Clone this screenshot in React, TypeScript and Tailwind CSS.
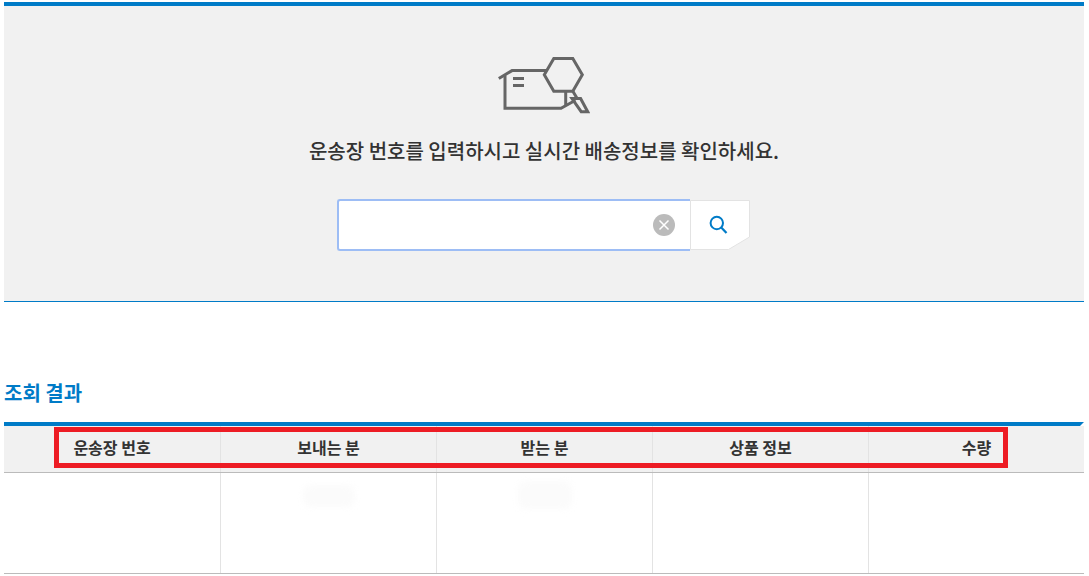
import React from "react";

const columns = ["운송장 번호", "보내는 분", "받는 분", "상품 정보", "수량"];

const ParcelIcon: React.FC = () => (
  <svg width="92" height="57" viewBox="0 0 92 57" fill="none" stroke="#666" strokeWidth="3">
    <path d="M0.8 21.5 14 13.6H49" />
    <path d="M7 18.5V51.3H63L77.5 43.2" />
    <path d="M15 21.5H26M15 28.5H26" />
    <path d="M55.8 1.6H74.8L84.3 17.8 74.8 34.2H55.8L46.3 17.8Z" />
    <path d="M67.7 34.5V48M75 34.5L79.5 42" />
    <path d="M74 41.5H82.6L89.7 54.7H83.2Z" />
  </svg>
);

const SearchForm: React.FC = () => (
  <form className="flex h-[52px] items-center" onSubmit={(e) => e.preventDefault()}>
    <div className="flex h-[52px] w-[353px] items-center rounded-l-[3px] border-2 border-r-0 border-[#9dbdf5] bg-white pr-[15px]">
      <input type="text" aria-label="운송장 번호" className="h-full min-w-0 flex-1 bg-transparent px-4 text-base outline-none" />
      <button type="reset" aria-label="지우기" className="h-[22px] w-[22px]">
        <svg width="22" height="22" viewBox="0 0 22 22" fill="none">
          <circle cx="11" cy="11" r="11" fill="#bbb" />
          <path d="M6.5 6.5l9 9M15.5 6.5l-9 9" stroke="#fff" strokeWidth="1.5" />
        </svg>
      </button>
    </div>
    <button type="submit" aria-label="조회" className="h-[50px] w-[60px]">
      <svg width="60" height="50" viewBox="0 0 60 50" fill="none">
        <path d="M0.5 0.5H59.5V37L38.5 49.5H0.5Z" fill="#fff" stroke="#e3e3e3" />
        <circle cx="26.8" cy="23" r="6.2" stroke="#007bc7" strokeWidth="2" />
        <path d="M31.3 27.5L36.5 33" stroke="#007bc7" strokeWidth="2.2" />
      </svg>
    </button>
  </form>
);

const ResultTable: React.FC = () => (
  <div className="relative h-[152px]">
    <div className="bg-[#f1f1f1]">
      <div className="h-1 bg-white [clip-path:polygon(calc(100%-4px)_0,100%_0,100%_100%,calc(100%-4px)_100%)]" />
      <div className="-mt-1 h-1 bg-[#007bc7] [clip-path:polygon(0_0,100%_0,calc(100%-4px)_100%,0_100%)]" />
    </div>
    <div className="grid h-[47px] grid-cols-5 border-b border-[#bbb] bg-[#f1f1f1]">
      {columns.map((label, i) => (
        <div
          key={label}
          className={`flex items-center justify-center pb-1 text-base font-bold text-[#333] ${i > 0 ? "border-l border-[#e3e3e3]" : ""}`}
        >
          {label}
        </div>
      ))}
    </div>
    <div className="grid h-[101px] grid-cols-5 border-b border-[#bbb] bg-white">
      {columns.map((label, i) => (
        <div key={label} className={`flex justify-center pt-2 ${i > 0 ? "border-l border-[#e3e3e3]" : ""}`}>
          {i === 1 && <div className="mt-1 h-[22px] w-[52px] rounded-lg bg-[#fbfbfb] blur-[3px]" />}
          {i === 2 && <div className="h-7 w-[54px] rounded-lg bg-[#fbfbfb] blur-[3px]" />}
        </div>
      ))}
    </div>
    {/* highlight frame around the header labels */}
    <div className="pointer-events-none absolute top-[5px] left-[50px] h-[41px] w-[954px] border-5 border-[#ed1c24]" />
  </div>
);

export default function App() {
  return (
    <main className="h-[576px] bg-white pt-0.5 pr-[5px] pl-1 font-['Noto_Sans_CJK_KR',sans-serif]">
      <section className="flex h-[300px] flex-col items-center border-t-4 border-b border-t-[#007bc7] border-b-[#007bc7] bg-[#f1f1f1] pt-[51px]">
        <ParcelIcon />
        <p className="mt-[22px] h-[31px] text-xl leading-[30px] font-medium text-[#333]">
          운송장 번호를 입력하시고 실시간 배송정보를 확인하세요.
        </p>
        <div className="mt-8 mr-0.5">
          <SearchForm />
        </div>
      </section>
      <section className="pt-[76px]">
        <h2 className="mb-[14px] h-[30px] text-xl leading-[30px] font-bold text-[#007bc7]">조회 결과</h2>
        <ResultTable />
      </section>
    </main>
  );
}
